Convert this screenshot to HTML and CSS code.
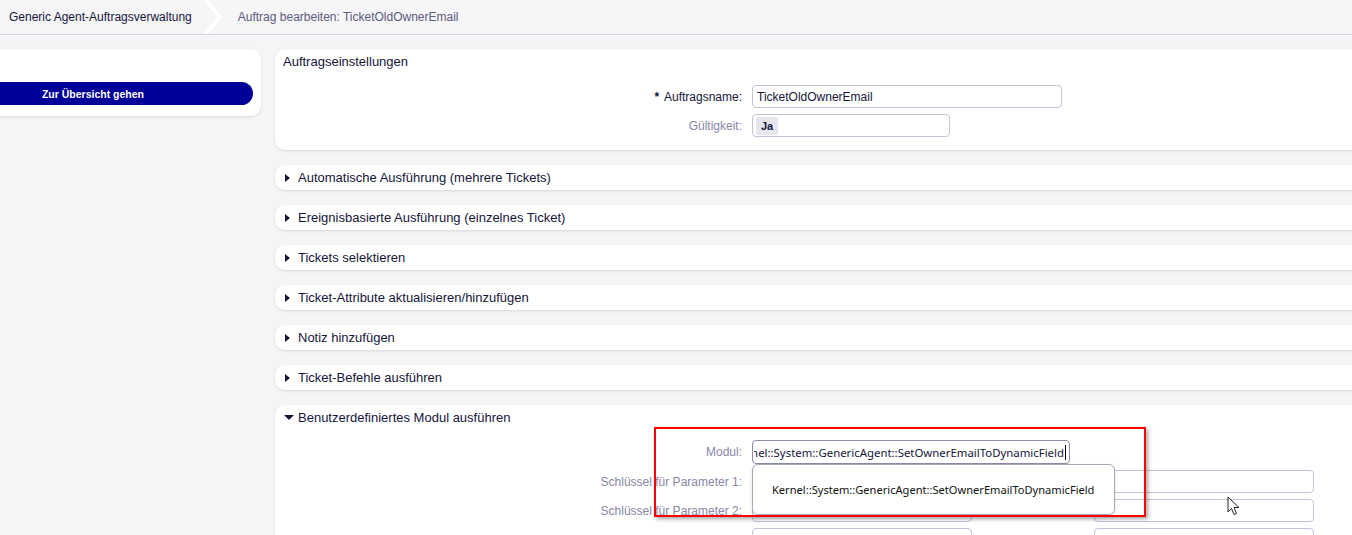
FILE: index.html
```
<!DOCTYPE html>
<html lang="de">
<head>
    <meta charset="UTF-8">
    <title>Generic Agent-Auftragsverwaltung</title>
    <link rel="stylesheet" href="styles.css">
</head>
<body>
    <div class="topbar">
        <span class="crumb first">Generic Agent-Auftragsverwaltung</span>
        <svg class="chevron" width="22" height="34" viewBox="0 0 22 34"><polyline points="4,0 18,17 4,34" fill="none" stroke="#fff" stroke-width="4"/></svg>
        <span class="crumb">Auftrag bearbeiten: TicketOldOwnerEmail</span>
    </div>

    <div class="layout">
        <div class="sidebar">
            <div class="side-card">
                <button class="btn-primary">Zur Übersicht gehen</button>
            </div>
        </div>

        <div class="main">
            <div class="widget">
                <div class="widget-head plain">Auftragseinstellungen</div>
                <div class="form first">
                    <label class="required"><span class="star">*</span> Auftragsname:</label>
                    <div class="field wide">TicketOldOwnerEmail</div>
                    <label>Gültigkeit:</label>
                    <div class="field mid"><span class="chip">Ja</span></div>
                </div>
            </div>

            <div class="widget collapsed"><div class="widget-head"><span class="tri right"></span>Automatische Ausführung (mehrere Tickets)</div></div>
            <div class="widget collapsed"><div class="widget-head"><span class="tri right"></span>Ereignisbasierte Ausführung (einzelnes Ticket)</div></div>
            <div class="widget collapsed"><div class="widget-head"><span class="tri right"></span>Tickets selektieren</div></div>
            <div class="widget collapsed"><div class="widget-head"><span class="tri right"></span>Ticket-Attribute aktualisieren/hinzufügen</div></div>
            <div class="widget collapsed"><div class="widget-head"><span class="tri right"></span>Notiz hinzufügen</div></div>
            <div class="widget collapsed"><div class="widget-head"><span class="tri right"></span>Ticket-Befehle ausführen</div></div>

            <div class="widget">
                <div class="widget-head"><span class="tri down"></span>Benutzerdefiniertes Modul ausführen</div>
                <div class="form module">
                    <label>Modul:</label>
                    <div class="modul-row">
                        <div class="field focus"><div class="scroll"><span class="scroll-text">Kernel::System::GenericAgent::SetOwnerEmailToDynamicField</span><span class="caret"></span></div></div>
                        <div class="dropdown">Kernel::System::GenericAgent::SetOwnerEmailToDynamicField</div>
                    </div>
                    <label>Schlüssel für Parameter 1:</label>
                    <div class="pair"><div class="field small"></div><div class="field small"></div></div>
                    <label>Schlüssel für Parameter 2:</label>
                    <div class="pair"><div class="field small"></div><div class="field small"></div></div>
                    <label>Schlüssel für Parameter 3:</label>
                    <div class="pair"><div class="field small"></div><div class="field small"></div></div>
                </div>
            </div>
        </div>
    </div>

    <!-- Markierung aus dem Screenshot -->
    <div class="highlight"></div>
    <svg class="cursor" width="14" height="21" viewBox="0 0 14 21"><path d="M1 1 L1 16 L4.5 12.5 L7 18.5 L9.5 17.5 L7 11.5 L12 11.5 Z" fill="#fff" stroke="#222" stroke-width="1" stroke-linejoin="round"/></svg>
</body>
</html>
```

FILE: styles.css
```
body {
    margin: 0;
    background-color: #f5f5f8;
    font-family: "Liberation Sans", Arial, sans-serif;
    color: #1a1a40;
    overflow: hidden;
    width: 1352px;
    height: 535px;
    position: relative;
}
.topbar {
    height: 34px;
    background-color: #f6f6f9;
    border-bottom: 1px solid #d4d2e3;
    display: flex;
    align-items: center;
    padding-left: 9px;
}
.crumb {
    font-size: 12px;
    color: #5c5a7c;
}
.crumb.first {
    color: #15153a;
}
.chevron {
    margin: 0 14px 0 10px;
}
.layout {
    display: flex;
    gap: 14px;
    padding-top: 14px;
}
.sidebar {
    width: 328px;
    margin-left: -67px;
    flex-shrink: 0;
}
.side-card {
    background-color: #fff;
    border-radius: 10px;
    box-shadow: 0 1px 3px rgba(0, 0, 0, 0.12);
    padding: 33px 8px 11px 0;
}
.btn-primary {
    display: block;
    width: 100%;
    height: 23px;
    border: none;
    border-radius: 0 12px 12px 0;
    background-color: #000099;
    color: #fff;
    font-family: "Liberation Sans", Arial, sans-serif;
    font-size: 10.5px;
    font-weight: bold;
    padding: 0;
    text-align: center;
}
.main {
    width: 1110px;
    flex-shrink: 0;
    display: flex;
    flex-direction: column;
    gap: 15px;
}
.widget {
    background-color: #fff;
    border-radius: 10px;
    box-shadow: 0 1px 3px rgba(0, 0, 0, 0.12);
}
.widget-head {
    height: 25px;
    display: flex;
    align-items: center;
    padding-left: 10px;
    font-size: 13px;
    color: #15153a;
}
.widget-head.plain {
    padding-left: 8px;
}
.tri {
    display: inline-block;
    width: 0;
    height: 0;
    margin-right: 8px;
}
.tri.right {
    border-top: 4px solid transparent;
    border-bottom: 4px solid transparent;
    border-left: 5px solid #15153a;
}
.tri.down {
    border-left: 5px solid transparent;
    border-right: 5px solid transparent;
    border-top: 5px solid #15153a;
    margin-left: -1px;
    margin-right: 4px;
}
.form {
    display: grid;
    grid-template-columns: 467px auto;
    column-gap: 10px;
    row-gap: 6px;
    align-items: center;
    padding: 11px 0 13px 0;
}
.form label {
    text-align: right;
    font-size: 12px;
    color: #8886a6;
}
.form label.required {
    color: #15153a;
}
.star {
    font-weight: bold;
    margin-right: 2px;
}
.field {
    box-sizing: border-box;
    height: 23px;
    border: 1px solid #c4c2d8;
    border-radius: 4px;
    background-color: #fff;
    font-size: 12px;
    color: #15153a;
    display: flex;
    align-items: center;
    padding-left: 4px;
}
.field.wide {
    width: 310px;
}
.field.mid {
    width: 198px;
    padding-left: 3px;
}
.chip {
    background-color: #e6e6ee;
    font-weight: bold;
    font-size: 11px;
    padding: 3px 5px;
    border-radius: 2px;
}
.form.module {
    padding: 10px 0 0 0;
}
.modul-row {
    position: relative;
    height: 24px;
}
.field.focus {
    width: 318px;
    height: 24px;
    border-color: #8d8bab;
    padding: 0 3px 0 1px;
}
.scroll {
    width: 100%;
    overflow: hidden;
    display: flex;
    justify-content: flex-end;
    align-items: center;
    font-family: "Noto Sans", "Open Sans", sans-serif;
    font-size: 11.4px;
    white-space: nowrap;
}
.scroll-text {
    flex-shrink: 0;
}
.caret {
    flex-shrink: 0;
    width: 1px;
    height: 15px;
    background-color: #000;
    margin-left: 1px;
}
.dropdown {
    position: absolute;
    top: 24px;
    left: 0;
    z-index: 2;
    box-sizing: border-box;
    width: 363px;
    height: 51px;
    background-color: #fff;
    border: 1px solid #a9a8b8;
    border-radius: 6px;
    box-shadow: 0 2px 4px rgba(0, 0, 0, 0.12);
    display: flex;
    align-items: center;
    padding-left: 19px;
    font-family: "Noto Sans", "Open Sans", sans-serif;
    font-size: 11.1px;
    color: #111;
    white-space: nowrap;
}
.pair {
    display: flex;
    gap: 122px;
}
.field.small {
    width: 220px;
}
.highlight {
    position: absolute;
    left: 654px;
    top: 427px;
    width: 488px;
    height: 86px;
    border: 2px solid #ff0000;
    box-shadow: 2px 2px 4px rgba(0, 0, 0, 0.35);
    z-index: 3;
}
.cursor {
    position: absolute;
    left: 1227px;
    top: 496px;
    z-index: 4;
}
```
